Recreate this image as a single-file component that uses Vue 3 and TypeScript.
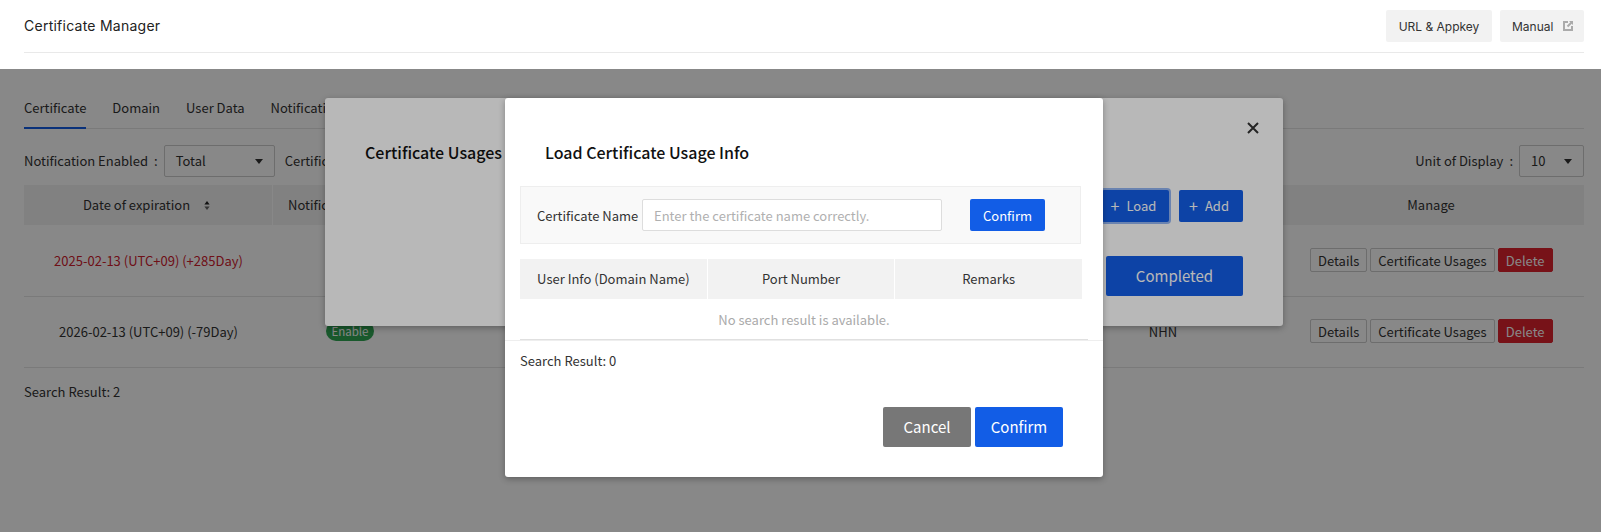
<script setup lang="ts">
interface Row { date: string; expired: boolean; badge?: string; issuer?: string }
const tabs: string[] = ['Certificate', 'Domain', 'User Data', 'Notification'];
const rows: Row[] = [
  { date: '2025-02-13 (UTC+09) (+285Day)', expired: true },
  { date: '2026-02-13 (UTC+09) (-79Day)', expired: false, badge: 'Enable', issuer: 'NHN' },
];
</script>

<template>
  <div class="page">
    <header class="top">
      <h1 class="app-title">Certificate Manager</h1>
      <div class="top-actions">
        <button class="top-btn url">URL &amp; Appkey</button>
        <button class="top-btn manual">
          Manual
          <svg class="ext" width="10" height="10" viewBox="0 0 10 10">
            <path d="M5 1H1v8h8V5" stroke="#aaa" stroke-width="2" fill="none" />
            <path d="M6 0h4v4L8.700 2.700 5.200 6.200 3.800 4.800 7.300 1.300z" fill="#aaa" />
          </svg>
        </button>
      </div>
    </header>

    <main class="content">
      <nav class="tabs">
        <span v-for="(t, i) in tabs" :key="t" class="tab" :class="{ active: i === 0 }">{{ t }}</span>
      </nav>

      <div class="filters">
        <div class="filter-group">
          <span class="f-label">Notification Enabled</span><span class="colon">:</span>
          <div class="select w-total"><span>Total</span><i class="caret"></i></div>
          <span class="f-label second">Certificate</span>
        </div>
        <div class="filter-group">
          <span class="f-label">Unit of Display</span><span class="colon">:</span>
          <div class="select w-unit"><span>10</span><i class="caret"></i></div>
        </div>
      </div>

      <div class="grid head">
        <div class="cell sep">
          Date of expiration
          <svg class="sort" width="6" height="9" viewBox="0 0 6 9">
            <path d="M3 0 5.600 3.500H0.400z" fill="#222" />
            <path d="M3 9 0.400 5.500H5.600z" fill="#666" />
          </svg>
        </div>
        <div class="cell">Notification Enabled</div>
        <div class="cell"></div>
        <div class="cell"></div>
        <div class="cell">Manage</div>
      </div>
      <div class="rows">
        <div v-for="r in rows" :key="r.date" class="grid row">
          <div class="cell" :class="{ red: r.expired }">{{ r.date }}</div>
          <div class="cell"><span v-if="r.badge" class="badge">{{ r.badge }}</span></div>
          <div class="cell"></div>
          <div class="cell">{{ r.issuer }}</div>
          <div class="cell manage">
            <button class="mini">Details</button>
            <button class="mini">Certificate Usages</button>
            <button class="mini danger">Delete</button>
          </div>
        </div>
      </div>
      <p class="result">Search Result: 2</p>
    </main>

    <div class="dim dim-a"></div>

    <section class="modal modal-a">
      <h2 class="m-title a-title">Certificate Usages</h2>
      <button class="close" aria-label="Close">
        <svg width="12" height="12" viewBox="0 0 12 12">
          <path d="M1 1 11 11M11 1 1 11" stroke="#333" stroke-width="2" fill="none" />
        </svg>
      </button>
      <div class="a-actions">
        <button class="blue small focus"><span class="plus">+</span>Load</button>
        <button class="blue small"><span class="plus">+</span>Add</button>
      </div>
      <button class="blue done">Completed</button>
    </section>

    <div class="dim dim-b"></div>

    <section class="modal modal-b">
      <h2 class="m-title b-title">Load Certificate Usage Info</h2>
      <div class="search">
        <label class="s-label">Certificate Name</label>
        <input class="s-input" type="text" placeholder="Enter the certificate name correctly." />
        <button class="blue s-btn">Confirm</button>
      </div>
      <div class="b-head">
        <div>User Info (Domain Name)</div>
        <div>Port Number</div>
        <div>Remarks</div>
      </div>
      <div class="empty">No search result is available.</div>
      <div class="b-rule"></div>
      <p class="b-result">Search Result: 0</p>
      <div class="b-foot">
        <button class="big grey">Cancel</button>
        <button class="big blue">Confirm</button>
      </div>
    </section>
  </div>
</template>

<style>
html, body { margin: 0; background: #fff; }
</style>

<style scoped>
.page {
  position: relative;
  width: 1601px;
  height: 532px;
  overflow: hidden;
  font-family: "Noto Sans CJK KR", "Noto Sans", sans-serif;
  font-size: 13px;
  color: #333;
  background: #fff;
}
button { font-family: inherit; border: 0; padding: 0; cursor: pointer; }

.top {
  height: 52px;
  margin: 0 17px 0 24px;
  border-bottom: 1px solid #e9e9e9;
  display: flex;
  justify-content: space-between;
  align-items: flex-start;
  font-family: Inter, sans-serif;
}
.app-title { margin: 0; font-size: 14px; font-weight: 400; line-height: 52px; color: #222; letter-spacing: .25px; }
.top-actions { display: flex; gap: 8px; padding-top: 10px; }
.top-btn {
  height: 32px;
  padding: 0 12px;
  box-sizing: border-box;
  display: flex;
  align-items: center;
  justify-content: space-between;
  background: #f2f2f2;
  border-radius: 2px;
  font-family: Inter, sans-serif;
  font-size: 12px;
  color: #333;
}
.url { width: 106px; justify-content: center; padding: 0; }
.manual { width: 84px; padding-right: 11px; }

.content { padding: 17px 17px 0 24px; }
.tabs { display: flex; gap: 26px; height: 59px; border-bottom: 1px solid #e5e5e5; box-sizing: border-box; }
.tab { height: 58px; line-height: 75px; box-sizing: border-box; }
.tab.active { border-bottom: 2px solid #125de6; height: 59px; }

.filters { display: flex; justify-content: space-between; margin-top: 16px; height: 32px; }
.filter-group { display: flex; align-items: center; }
.f-label, .colon { padding-bottom: 2px; }
.colon { margin: 0 6px; }
.second { margin-left: 10px; }
.select {
  height: 32px;
  box-sizing: border-box;
  border: 1px solid #ccc;
  border-radius: 2px;
  background: #fff;
  display: flex;
  align-items: center;
  justify-content: space-between;
  padding: 0 11px 2px;
}
.w-total { width: 111px; }
.w-unit { width: 65px; }
.caret { width: 0; height: 0; border: 4px solid transparent; border-top: 5px solid #333; border-bottom: 0; margin-top: 2px; }

.grid { display: grid; grid-template-columns: 249px 154px 621px 230px 306px; }
.cell { display: flex; align-items: center; justify-content: center; }
.head { margin-top: 8px; height: 40px; background: #f2f2f2; }
.head .cell { padding-bottom: 2px; box-sizing: border-box; }
.head .sep { border-right: 1px solid #fff; gap: 14px; padding-right: 3px; }
.sort { flex: none; margin-top: 2px; }
.rows { margin-top: 1px; }
.row { height: 71px; padding-bottom: 2px; border-bottom: 1px solid #e5e5e5; box-sizing: border-box; }
.red { color: #d0202e; }
.badge {
  background: #30a854;
  color: #fff;
  border-radius: 10px;
  height: 20px;
  line-height: 20px;
  padding: 0 5.500px;
  font-size: 11.500px;
}
.manage { gap: 3px; padding-left: 32px; justify-content: flex-start; box-sizing: border-box; }
.mini {
  height: 24px;
  padding: 0 7px;
  min-width: 57px;
  background: #fff;
  border: 1px solid #ccc;
  border-radius: 2px;
  font-size: 13px;
  color: #333;
}
.danger { background: #e0222e; border-color: #e0222e; color: #fff; min-width: 55px; }
.result { margin: 14px 0 0; line-height: 20px; }

.dim { position: absolute; left: 0; right: 0; bottom: 0; top: 69px; }
.dim-a { background: rgba(0, 0, 0, .26); }
.dim-b { background: rgba(0, 0, 0, .28); }

.modal { position: absolute; background: #fff; border-radius: 3px; box-shadow: 0 2px 6px rgba(0, 0, 0, .3); box-sizing: border-box; }
.modal-a { left: 325px; top: 98px; width: 958px; height: 228px; }
.m-title { margin: 0; font-size: 16px; font-weight: 500; color: #111; line-height: 24px; }
.a-title { padding: 42px 0 0 40px; }
.close { position: absolute; left: 922px; top: 24px; width: 12px; height: 12px; background: none; display: flex; }
.a-actions { display: flex; justify-content: flex-end; gap: 10px; margin: 26px 40px 0 0; }
.blue { background: #125de6; color: #fff; border-radius: 2px; }
.small { height: 32px; width: 64px; font-size: 13px; display: flex; align-items: center; justify-content: center; gap: 7px; padding: 0 4px 2px 0; box-sizing: border-box; }
.plus { font-size: 16px; line-height: 1; }
.focus { width: 67px; box-shadow: 0 0 0 2px rgba(18, 93, 230, .45); }
.done { display: block; width: 137px; height: 40px; margin: 34px 40px 0 auto; font-size: 15px; padding-bottom: 2px; box-sizing: border-box; }

.modal-b { left: 505px; top: 98px; width: 598px; height: 379px; padding: 0 15px; }
.b-title { padding: 42px 0 0 25px; }
.search {
  margin-top: 22px;
  width: 561px;
  height: 58px;
  box-sizing: border-box;
  background: #f9f9f9;
  border: 1px solid #eee;
  display: flex;
  align-items: center;
  padding-left: 16px;
}
.s-label { width: 105px; flex: none; white-space: nowrap; }
.s-input {
  width: 300px;
  height: 32px;
  box-sizing: border-box;
  border: 1px solid #ddd;
  border-radius: 2px;
  padding: 0 11px;
  font-family: inherit;
  font-size: 13px;
  outline: none;
}
.s-input::placeholder { color: #b0b0b0; opacity: 1; }
.s-btn { width: 75px; height: 32px; margin-left: 28px; font-size: 13px; }
.b-head {
  margin-top: 15px;
  width: 562px;
  height: 40px;
  display: grid;
  grid-template-columns: 1fr 1fr 1fr;
  gap: 1px;
}
.b-head div { background: #f2f2f2; display: flex; align-items: center; justify-content: center; padding-bottom: 2px; box-sizing: border-box; }
.empty { width: 568px; height: 41px; line-height: 42px; text-align: center; color: #aaa; border-bottom: 1px solid #e0e0e0; box-sizing: border-box; }
.b-rule { height: 1px; background: #eee; margin: 0 -15px; }
.b-result { margin: 10px 0 0; line-height: 20px; }
.b-foot { display: flex; justify-content: flex-end; gap: 4px; margin: 36px 25px 0 0; }
.big { width: 88px; height: 40px; font-size: 15px; padding-bottom: 1px; box-sizing: border-box; }
.grey { background: #777; color: #fff; border-radius: 2px; }
</style>
